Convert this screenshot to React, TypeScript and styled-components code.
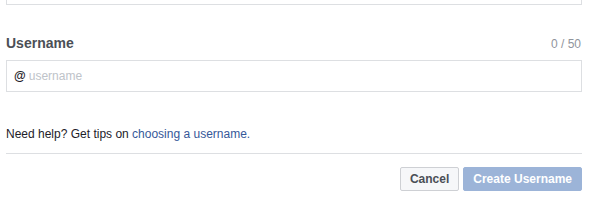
import styled, { createGlobalStyle } from "styled-components";

const GlobalStyle = createGlobalStyle`
	body {
		margin: 0;
		background: #ffffff;
		font-family: "Liberation Sans", Arial, Helvetica, sans-serif;
	}
`;

const Wrapper = styled.div`
	width: 576px;
	padding-left: 6px;
`;

const CutOffBox = styled.div`
	height: 4px;
	border: 1px solid #dddfe2;
	border-top: none;
	background: #ffffff;
`;

const LabelRow = styled.div`
	display: flex;
	justify-content: space-between;
	align-items: baseline;
	margin-top: 29px;
	height: 18px;
`;

const Label = styled.label`
	font-size: 14px;
	line-height: 18px;
	font-weight: bold;
	color: #4b4f56;
`;

const Counter = styled.span`
	font-size: 12px;
	color: #90949c;
	padding-right: 1px;
`;

const InputBox = styled.div`
	display: flex;
	align-items: center;
	margin-top: 8px;
	height: 30px;
	border: 1px solid #dddfe2;
	padding: 0 7px;
	gap: 3px;
	font-size: 12px;
`;

const At = styled.span`
	color: #1d2129;
	font-weight: bold;
`;

const Field = styled.input`
	flex: 1;
	border: none;
	outline: none;
	padding: 0;
	font-family: inherit;
	font-size: 12px;
	color: #1d2129;

	&::placeholder {
		color: #bec3c9;
	}
`;

const Help = styled.p`
	margin: 34px 0 0;
	font-size: 12px;
	line-height: 16px;
	color: #1d2129;

	a {
		color: #365899;
		text-decoration: none;
	}
`;

const Divider = styled.hr`
	margin: 11px 0 0;
	border: none;
	border-top: 1px solid #dddfe2;
`;

const Footer = styled.div`
	display: flex;
	justify-content: flex-end;
	gap: 4px;
	margin-top: 13px;
`;

const BaseButton = styled.button`
	height: 24px;
	padding: 0 9px;
	border-radius: 2px;
	font-family: inherit;
	font-size: 12px;
	font-weight: bold;
	cursor: pointer;
`;

const CancelButton = styled(BaseButton)`
	background-color: #f6f7f9;
	border: 1px solid #ced0d4;
	color: #4b4f56;
`;

const PrimaryButton = styled(BaseButton)<{ $disabled?: boolean }>`
	background-color: ${(p) => (p.$disabled ? "#9cb4d8" : "#4267b2")};
	border: 1px solid ${(p) => (p.$disabled ? "#9cb4d8" : "#4267b2")};
	color: #ffffff;
	cursor: ${(p) => (p.$disabled ? "default" : "pointer")};
`;

const App = () => {
	return (
		<>
			<GlobalStyle />
			<Wrapper>
				<CutOffBox />
				<LabelRow>
					<Label>Username</Label>
					<Counter>0 / 50</Counter>
				</LabelRow>
				<InputBox>
					<At>@</At>
					<Field placeholder="username" />
				</InputBox>
				<Help>
					Need help? Get tips on <a href="#">choosing a username.</a>
				</Help>
				<Divider />
				<Footer>
					<CancelButton>Cancel</CancelButton>
					<PrimaryButton $disabled>Create Username</PrimaryButton>
				</Footer>
			</Wrapper>
		</>
	);
};

export default App;
